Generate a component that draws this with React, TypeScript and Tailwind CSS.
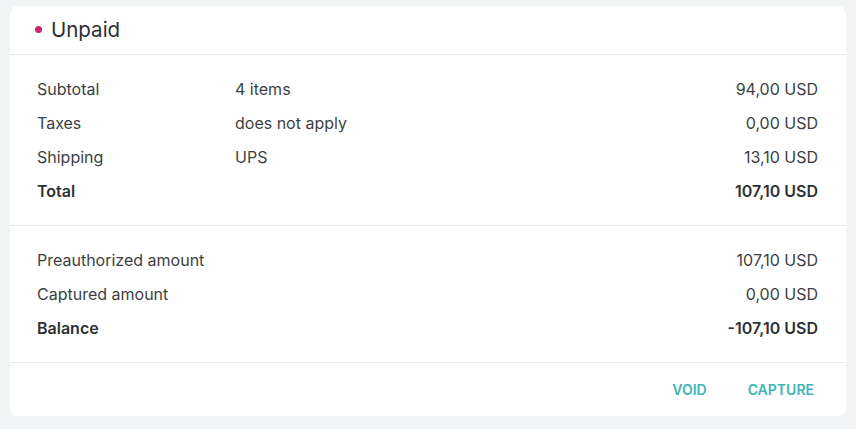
const rows1 = [
  { label: "Subtotal", mid: "4 items", value: "94,00 USD" },
  { label: "Taxes", mid: "does not apply", value: "0,00 USD" },
  { label: "Shipping", mid: "UPS", value: "13,10 USD" },
  { label: "Total", mid: "", value: "107,10 USD", bold: true },
];

const rows2 = [
  { label: "Preauthorized amount", mid: "", value: "107,10 USD" },
  { label: "Captured amount", mid: "", value: "0,00 USD" },
  { label: "Balance", mid: "", value: "-107,10 USD", bold: true },
];

type Row = { label: string; mid: string; value: string; bold?: boolean };

function SummaryRow({ row }: { row: Row }) {
  return (
    <div
      className={
        "flex h-[34px] items-center text-[16px] " +
        (row.bold ? "font-semibold text-[#2f3133]" : "text-[#3d3f42]")
      }
    >
      <div className="w-[198px]">{row.label}</div>
      <div className="flex-1">{row.mid}</div>
      <div className="text-right">{row.value}</div>
    </div>
  );
}

export default function App() {
  return (
    <div
      className="min-h-[429px] bg-[#f1f4f5] px-[10px] pt-[6px] pb-[14px]"
      style={{ fontFamily: "Inter, 'Noto Sans', sans-serif" }}
    >
      <div className="rounded-lg bg-white">
        <div className="flex h-[49px] items-center gap-[9px] border-b border-[#e8eaeb] pl-[25px]">
          <span className="mt-[-1px] h-[7px] w-[7px] rounded-full bg-[#c8246f]" />
          <h2 className="text-[20.5px] text-[#2d2f31]">Unpaid</h2>
        </div>
        <div className="border-b border-[#e8eaeb] pt-[17px] pr-[28px] pb-[17px] pl-[27px]">
          {rows1.map((r) => (
            <SummaryRow key={r.label} row={r} />
          ))}
        </div>
        <div className="border-b border-[#e8eaeb] pt-[17px] pr-[28px] pb-[17px] pl-[27px]">
          {rows2.map((r) => (
            <SummaryRow key={r.label} row={r} />
          ))}
        </div>
        <div className="flex h-[53px] items-center justify-end gap-[25px] pr-[24px]">
          <button className="px-[8px] py-[6px] text-[14px] font-semibold uppercase text-[#3fb5b5]">
            Void
          </button>
          <button className="px-[8px] py-[6px] text-[14px] font-semibold uppercase text-[#3fb5b5]">
            Capture
          </button>
        </div>
      </div>
    </div>
  );
}
